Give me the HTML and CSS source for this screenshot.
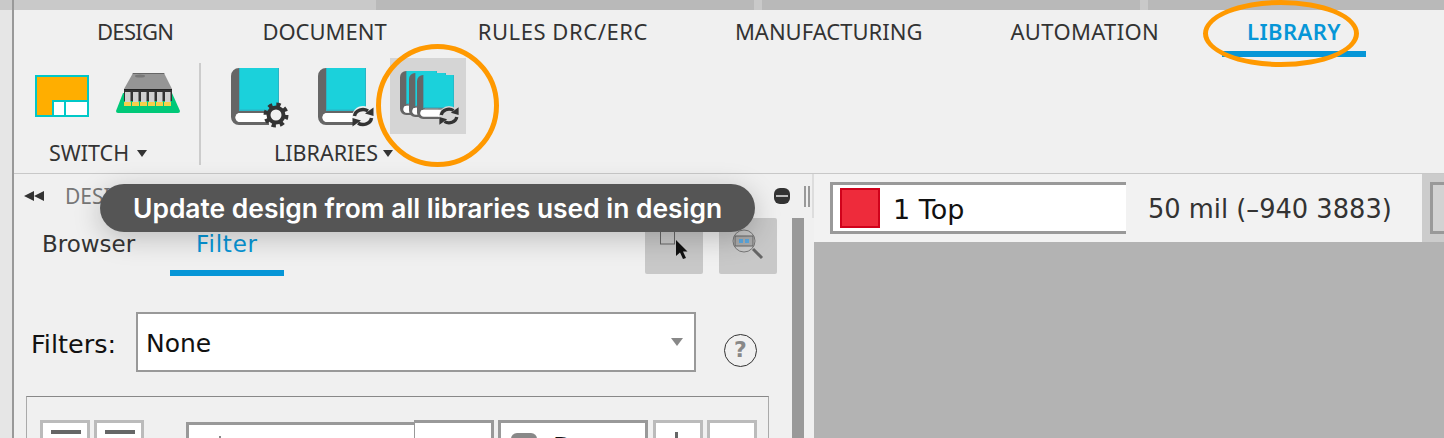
FILE: index.html
```html
<!DOCTYPE html>
<html lang="en">

<head>
    <meta charset="UTF-8">
    <meta name="viewport" content="width=device-width, initial-scale=1.0">
    <title>Library tab</title>
    <link rel="stylesheet" href="styles.css">
</head>

<body>

    <svg class="icon-defs" aria-hidden="true">
        <symbol id="sync" viewBox="-12 -12 24 24">
            <path d="M-8.500 -1A8.500 7.500 0 0 1 5 -6" fill="none" stroke="#333" stroke-width="3.500" />
            <path d="M2 -3.500L10.500 -1V-9.500z" fill="#333" />
            <path d="M8.500 1A8.500 7.500 0 0 1 -5 6" fill="none" stroke="#333" stroke-width="3.500" />
            <path d="M-2 3.500L-10.500 1V9.500z" fill="#333" />
        </symbol>
        <symbol id="book" viewBox="0 0 48 57">
            <path d="M8 0h2v43h30v2H9a4.500 4.500 0 0 0 0 9h29v3H8a8 8 0 0 1-8-8V8a8 8 0 0 1 8-8z" fill="#666" />
            <path d="M9 45h29v9H9a4.500 4.500 0 0 1 0-9z" fill="#fff" />
            <rect x="8" width="40" height="43" fill="#2bb4c4" />
            <rect x="9" width="38" height="41.500" fill="#1bd1db" />
        </symbol>
    </svg>

    <div class="app">
        <div class="rail">
            <div class="rail-top"></div>
        </div>

        <div class="main">
            <div class="top-strip">
                <div class="strip-light strip-first"></div>
                <div class="strip-dark"></div>
                <div class="strip-light"></div>
                <div class="strip-dark"></div>
                <div class="strip-light"></div>
                <div class="strip-dark strip-last"></div>
            </div>

            <div class="ribbon">
                <div class="tabs">
                    <div class="tab tab-design">DESIGN</div>
                    <div class="tab">DOCUMENT</div>
                    <div class="tab tab-rules">RULES DRC/ERC</div>
                    <div class="tab">MANUFACTURING</div>
                    <div class="tab tab-automation">AUTOMATION</div>
                    <div class="tab active">LIBRARY</div>
                </div>

                <div class="tools">
                    <div class="tool-group switch-group">
                        <div class="tool-row">
                            <svg class="switch-icon" width="54" height="42" viewBox="0 0 54 42">
                                <rect x="1" y="1" width="52" height="40" fill="#ffae00" stroke="#00c8c8" stroke-width="2" />
                                <rect x="18" y="26" width="35" height="15" fill="#fff" stroke="#00c8c8" stroke-width="2" />
                                <rect x="29" y="26" width="2" height="15" fill="#00c8c8" />
                            </svg>
                            <svg class="chip-icon" width="64" height="40" viewBox="0 0 64 40">
                                <path d="M7 20H56L64 38Q64 40 62 40H2Q0 40 0 38z" fill="#00c878" />
                                <path d="M17 0H48L56 16H8z" fill="#959595" />
                                <path d="M17 0H48L48.500 1H16.500z" fill="#666" />
                                <ellipse cx="24" cy="3" rx="5" ry="1.500" fill="#777" />
                                <rect x="8" y="16" width="48" height="12" fill="#333" />
                                <rect x="8" y="16" width="48" height="1" fill="#222" />
                                <g fill="#d0d0d0">
                                    <rect x="9" y="19" width="5.500" height="10" />
                                    <rect x="17" y="19" width="5.500" height="10" />
                                    <rect x="25" y="19" width="5.500" height="10" />
                                    <rect x="33" y="19" width="5.500" height="10" />
                                    <rect x="41" y="19" width="5.500" height="10" />
                                    <rect x="49" y="19" width="5.500" height="10" />
                                </g>
                                <g fill="#f5d04a">
                                    <rect x="8" y="29" width="7" height="4" />
                                    <rect x="16" y="29" width="7" height="4" />
                                    <rect x="24" y="29" width="7" height="4" />
                                    <rect x="32" y="29" width="7" height="4" />
                                    <rect x="40" y="29" width="7" height="4" />
                                    <rect x="48" y="29" width="7" height="4" />
                                </g>
                            </svg>
                        </div>
                        <div class="tool-label switch-label">SWITCH<span class="caret"></span></div>
                    </div>

                    <div class="tool-sep"></div>

                    <div class="tool-group library-group">
                        <div class="tool-row">
                            <svg class="book-icon" width="60" height="60" viewBox="0 0 60 60">
                                <use href="#book" width="48" height="57" />
                                <circle cx="45" cy="47" r="10.500" fill="none" stroke="#333" stroke-width="4" stroke-dasharray="4.250 4" />
                                <circle cx="45" cy="47" r="7.500" fill="#f0f0f0" stroke="#333" stroke-width="4" />
                            </svg>
                            <svg class="book-icon" width="60" height="60" viewBox="0 0 60 60">
                                <use href="#book" width="48" height="57" />
                                <circle cx="45" cy="49" r="11" fill="#f0f0f0" />
                                <use href="#sync" x="33" y="37" width="24" height="24" />
                            </svg>
                            <div class="tool-active">
                                <svg width="60" height="60" viewBox="0 0 60 60">
                                    <use href="#book" width="37" height="50" y="0" />
                                    <use href="#book" x="9" y="2" width="37" height="50" />
                                    <use href="#book" x="17" y="4" width="37" height="50" />
                                    <circle cx="49" cy="48" r="10" fill="#d5d5d5" />
                                    <use href="#sync" x="38" y="37" width="22" height="22" />
                                </svg>
                            </div>
                        </div>
                        <div class="tool-label library-label">LIBRARIES<span class="caret"></span></div>
                    </div>
                </div>
            </div>

            <div class="lower">
                <div class="left-col">
                    <div class="panel-header">
                        <div class="collapse-arrows">
                            <span class="arrow-left"></span>
                            <span class="arrow-left"></span>
                        </div>
                        <div class="panel-title">DESIGN MANAGER</div>
                        <div class="minus-btn"></div>
                        <div class="grip"></div>
                    </div>

                    <div class="panel-wrap">
                        <div class="panel-body">
                            <div class="sub-tabs">
                                <div class="sub-tab">Browser</div>
                                <div class="sub-tab active">Filter</div>
                                <div class="sub-buttons">
                                    <div class="sub-btn">
                                        <svg width="58" height="56" viewBox="0 0 58 56">
                                            <rect x="15.500" y="0" width="14" height="26" fill="none" stroke="#666" />
                                            <path d="M31 22V38L35 34.500L38 41L41 40L38 33.500H42.500z" fill="#111" />
                                        </svg>
                                    </div>
                                    <div class="sub-btn">
                                        <svg width="58" height="56" viewBox="0 0 58 56">
                                            <circle cx="25" cy="23" r="11" fill="none" stroke="#777" />
                                            <rect x="16" y="18" width="18" height="10" fill="#aaa" stroke="#666" />
                                            <rect x="20" y="21" width="4" height="4" fill="#5ba7de" />
                                            <rect x="26" y="21" width="4" height="4" fill="#5ba7de" />
                                            <path d="M34 31L43 40" stroke="#666" stroke-width="3" />
                                        </svg>
                                    </div>
                                </div>
                            </div>

                            <div class="filter-row">
                                <div class="filter-label">Filters:</div>
                                <div class="filter-select">
                                    None
                                    <span class="select-caret"></span>
                                </div>
                                <div class="help-btn">?</div>
                            </div>

                            <div class="filter-box">
                                <div class="box-btn"><span class="bar"></span></div>
                                <div class="box-btn"><span class="bar"></span></div>
                                <div class="box-input first"></div>
                                <div class="box-input second"></div>
                                <div class="box-input third">
                                    <span class="drive-icon"></span>
                                    <span class="third-text">Da</span>
                                </div>
                                <div class="box-btn add"><span class="plus"></span></div>
                                <div class="box-btn last"></div>
                            </div>
                        </div>
                        <div class="scroll-track"></div>
                    </div>
                </div>

                <div class="right-col">
                    <div class="layer-strip">
                        <div class="layer-box">
                            <span class="swatch"></span>
                            <span class="layer-name">1 Top</span>
                        </div>
                        <div class="readout">50 mil (–940 3883)</div>
                        <div class="strip-end">
                            <div class="strip-end-box"></div>
                        </div>
                    </div>
                    <div class="canvas"></div>
                </div>
            </div>
        </div>

        <div class="ring-tool"></div>
        <div class="ring-tab"></div>
        <div class="tooltip">Update design from all libraries used in design</div>
    </div>

</body>

</html>
```

FILE: styles.css
```css
* {
    box-sizing: border-box;
}

html,
body {
    margin: 0;
    height: 100%;
}

body {
    font-family: "DejaVu Sans", sans-serif;
    background-color: #f0f0f0;
    color: #333;
    overflow: hidden;
}

.icon-defs {
    display: none;
}

svg {
    display: block;
    flex: none;
}

.app {
    position: relative;
    display: flex;
    width: 1444px;
    height: 438px;
    overflow: hidden;
}

.rail {
    width: 14px;
    flex: none;
    background-color: #e6e6e6;
    border-right: 2px solid #999;
}

.rail-top {
    height: 10px;
    background-color: #c9c9c9;
}

.main {
    flex: 1;
    min-width: 0;
    display: flex;
    flex-direction: column;
}

/* top strip */
.top-strip {
    display: flex;
    height: 10px;
    flex: none;
}

.strip-light {
    width: 8px;
    background-color: #c9c9c9;
}

.strip-light.strip-first {
    width: 362px;
}

.strip-dark {
    width: 378px;
    background-color: #b9b9b9;
}

.strip-dark.strip-last {
    flex: 1;
}

/* ribbon */
.ribbon {
    height: 164px;
    flex: none;
    border-bottom: 1px solid #c8c8c8;
}

.tabs {
    display: flex;
    height: 47px;
    padding-left: 58px;
    gap: 39px;
    font-family: "Noto Sans", sans-serif;
    font-size: 22px;
}

.tab {
    padding: 0 25px;
    line-height: 43px;
    white-space: nowrap;
}

.tab-design {
    letter-spacing: -0.7px;
}

.tab-rules {
    margin-left: 2px;
    margin-right: -2px;
    letter-spacing: 0.55px;
}

.tab-automation {
    margin-left: -1px;
    letter-spacing: 0.35px;
}

.tab.active {
    margin-left: -1px;
    color: #0696d7;
    font-weight: 600;
    letter-spacing: 0.4px;
    border-bottom: 6px solid #0696d7;
}

.tools {
    display: flex;
    height: 116px;
}

.tool-group {
    display: flex;
    flex-direction: column;
}

.switch-group {
    width: 185px;
    padding-left: 21px;
}

.library-group {
    padding-left: 30px;
}

.tool-row {
    display: flex;
    align-items: center;
    height: 77px;
}

.chip-icon {
    margin-left: 27px;
    margin-bottom: 5px;
}

.book-icon {
    margin-right: 27px;
    margin-top: 5px;
}

.book-icon + .tool-active {
    margin-left: -15px;
}

.tool-active {
    width: 76px;
    height: 76px;
    padding: 10px 0 0 10px;
    background-color: #d5d5d5;
}

.tool-sep {
    width: 2px;
    height: 102px;
    margin-top: 6px;
    background-color: #ccc;
}

.tool-label {
    display: flex;
    align-items: center;
    margin-top: 4px;
    font-family: "Noto Sans", sans-serif;
    font-size: 21.5px;
    line-height: 30px;
}

.switch-label {
    margin-left: 14px;
    gap: 8px;
}

.library-label {
    margin-left: 43px;
    gap: 5px;
}

.caret {
    width: 0;
    height: 0;
    border-left: 5.500px solid transparent;
    border-right: 5.500px solid transparent;
    border-top: 7px solid #333;
}

/* lower area */
.lower {
    flex: 1;
    min-height: 0;
    display: flex;
}

.left-col {
    width: 800px;
    flex: none;
    display: flex;
    flex-direction: column;
}

.panel-header {
    display: flex;
    align-items: center;
    height: 44px;
    flex: none;
    padding-left: 10px;
    position: relative;
    border-right: 2px solid #ddd;
}

.collapse-arrows {
    display: flex;
}

.arrow-left {
    width: 0;
    height: 0;
    border-top: 5px solid transparent;
    border-bottom: 5px solid transparent;
    border-right: 10px solid #333;
}

.panel-title {
    margin-left: 21px;
    font-family: "Noto Sans", sans-serif;
    font-size: 21px;
    color: #777;
    white-space: nowrap;
}

.minus-btn {
    position: relative;
    width: 16px;
    height: 16px;
    margin-left: auto;
    border-radius: 6px;
    background-color: #333;
}

.minus-btn::after {
    content: "";
    position: absolute;
    left: 2px;
    right: 2px;
    top: 7px;
    height: 2px;
    background-color: #bbb;
}

.grip {
    width: 6px;
    height: 21px;
    margin-left: 14px;
    margin-right: 2px;
    border-left: 2px solid #999;
    border-right: 2px solid #999;
}

.panel-wrap {
    flex: 1;
    min-height: 0;
    display: flex;
}

.panel-body {
    width: 778px;
    flex: none;
    overflow: hidden;
}

.scroll-track {
    width: 12px;
    flex: none;
    background-color: #999;
}

.sub-tabs {
    display: flex;
    align-items: flex-start;
    height: 58px;
    font-size: 23px;
}

.sub-tab {
    width: 148px;
    height: 58px;
    padding-left: 28px;
    line-height: 52px;
}

.sub-tab.active {
    width: 114px;
    margin-left: 8px;
    padding: 0;
    text-align: center;
    letter-spacing: 0.8px;
    color: #0696d7;
    border-bottom: 6px solid #0696d7;
}

.sub-buttons {
    display: flex;
    gap: 16px;
    margin-left: auto;
    margin-right: 15px;
}

.sub-btn {
    width: 58px;
    height: 56px;
    border-radius: 2px;
    background-color: #c8c8c8;
}

.filter-row {
    display: flex;
    align-items: center;
    margin-top: 36px;
    padding-left: 17px;
}

.filter-label {
    width: 105px;
    padding-top: 3px;
    font-size: 25.500px;
    color: #111;
}

.filter-select {
    position: relative;
    width: 560px;
    height: 60px;
    padding-left: 8px;
    line-height: 60px;
    font-size: 25px;
    color: #111;
    background-color: #fff;
    border: 2px solid #999;
}

.select-caret {
    position: absolute;
    right: 11px;
    top: 24px;
    width: 0;
    height: 0;
    border-left: 6px solid transparent;
    border-right: 6px solid transparent;
    border-top: 8px solid #888;
}

.help-btn {
    align-self: flex-start;
    width: 33px;
    height: 33px;
    margin-top: 22px;
    margin-left: 28px;
    border: 1px solid #333;
    border-radius: 50%;
    text-align: center;
    font-size: 22px;
    font-weight: 700;
    line-height: 30px;
    color: #888;
}

.filter-box {
    display: flex;
    align-items: flex-start;
    width: 743px;
    height: 80px;
    margin-top: 24px;
    margin-left: 12px;
    padding: 23px 0 0 13px;
    border: 1px solid #aaa;
    border-top-color: #888;
}

.box-btn {
    position: relative;
    width: 50px;
    height: 60px;
    margin-right: 4px;
    flex: none;
    background-color: #fff;
    border: 3px solid #bbb;
}

.bar {
    position: absolute;
    left: 8px;
    top: 7px;
    width: 30px;
    height: 4px;
    background-color: #666;
}

.box-input {
    height: 60px;
    flex: none;
    background-color: #fff;
    border: 3px solid #999;
}

.box-input.first {
    position: relative;
    width: 228px;
    margin-top: 2px;
    margin-left: 38px;
    border-right: none;
}

.box-input.first::after {
    content: "";
    position: absolute;
    left: 30px;
    top: 11px;
    width: 2px;
    height: 4px;
    background-color: #888;
}

.box-input.second {
    width: 80px;
    border-left-width: 1px;
}

.box-input.third {
    position: relative;
    width: 150px;
    margin-left: 4px;
    margin-right: 5px;
}

.drive-icon {
    position: absolute;
    left: 10px;
    top: 10px;
    width: 26px;
    height: 16px;
    border-radius: 6px 6px 0 0;
    background-color: #888;
}

.third-text {
    position: absolute;
    left: 52px;
    top: 9px;
    font-size: 25px;
    color: #111;
}

.box-btn.last {
    margin-right: 0;
}

.plus {
    position: absolute;
    left: 19px;
    top: 9px;
    width: 3px;
    height: 20px;
    background-color: #666;
}

/* right side */
.right-col {
    flex: 1;
    min-width: 0;
    display: flex;
    flex-direction: column;
}

.layer-strip {
    display: flex;
    height: 68px;
    flex: none;
    background-color: #f2f2f2;
}

.layer-box {
    display: flex;
    align-items: center;
    gap: 13px;
    width: 296px;
    height: 52px;
    margin: 8px 0 8px 16px;
    padding-left: 7px;
    background-color: #fff;
    border: 3px solid #999;
    border-right: none;
    font-size: 27px;
    color: #111;
}

.layer-name {
    padding-top: 2px;
}

.swatch {
    width: 40px;
    height: 40px;
    background-color: #ee2b3b;
    border: 2px solid #d0021b;
}

.readout {
    flex: 1;
    padding-left: 22px;
    line-height: 70px;
    font-size: 25.700px;
    white-space: nowrap;
}

.strip-end {
    width: 22px;
    flex: none;
    padding: 8px 0 8px 8px;
    background-color: #ccc;
}

.strip-end-box {
    height: 52px;
    border: 3px solid #999;
    border-right: none;
    background-color: #d2d2d2;
}

.canvas {
    flex: 1;
    background-color: #b3b3b3;
}

/* annotation overlays */
.ring-tool {
    position: absolute;
    left: 376px;
    top: 44px;
    width: 123px;
    height: 123px;
    border: 5px solid #ff9900;
    border-radius: 50%;
}

.ring-tab {
    position: absolute;
    left: 1203px;
    top: 0;
    width: 156px;
    height: 67px;
    border: 5px solid #ff9900;
    border-radius: 50%;
}

.tooltip {
    position: absolute;
    left: 100px;
    top: 184px;
    width: 655px;
    height: 48px;
    padding-left: 33px;
    border-radius: 24px;
    background-color: #555;
    box-shadow: 0 6px 28px rgba(0, 0, 0, 0.22);
    font-family: Inter, sans-serif;
    font-size: 26.400px;
    font-weight: 600;
    line-height: 49px;
    color: #fff;
    white-space: nowrap;
}
```
